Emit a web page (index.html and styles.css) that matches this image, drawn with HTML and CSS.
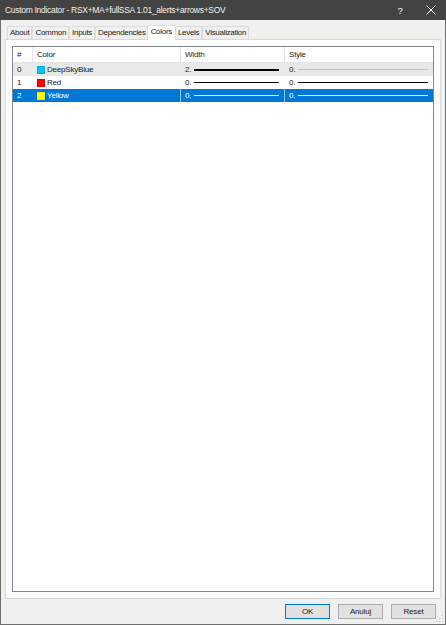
FILE: index.html
```html
<!DOCTYPE html>
<html>
<head>
<meta charset="utf-8">
<link rel="stylesheet" href="styles.css">
</head>
<body>
<div class="window">
  <div class="titlebar">
    <span class="title">Custom Indicator - RSX+MA+fullSSA 1.01_alerts+arrows+SOV</span>
    <span class="help">?</span>
    <span class="close"><svg width="10" height="10" viewBox="0 0 10 10"><path d="M0.5 0.5L9.5 9.5M9.5 0.5L0.5 9.5" stroke="#fff" stroke-width="1"/></svg></span>
  </div>
  <div class="body">
    <div class="tabs">
      <div class="tab">About</div>
      <div class="tab">Common</div>
      <div class="tab">Inputs</div>
      <div class="tab">Dependencies</div>
      <div class="tab active">Colors</div>
      <div class="tab">Levels</div>
      <div class="tab">Visualization</div>
    </div>
    <div class="panel">
      <div class="list">
        <div class="row head">
          <div class="c c0">#</div>
          <div class="c c1">Color</div>
          <div class="c c2">Width</div>
          <div class="c c3">Style</div>
        </div>
        <div class="row r-gray">
          <div class="c c0">0</div>
          <div class="c c1"><span class="sw" style="background:#00bfff"></span>DeepSkyBlue</div>
          <div class="c c2">2.<span class="ln thick"></span></div>
          <div class="c c3">0.<span class="ln light"></span></div>
        </div>
        <div class="row">
          <div class="c c0">1</div>
          <div class="c c1"><span class="sw" style="background:#ff0000"></span>Red</div>
          <div class="c c2">0.<span class="ln"></span></div>
          <div class="c c3">0.<span class="ln"></span></div>
        </div>
        <div class="row sel">
          <div class="c c0">2</div>
          <div class="c c1"><span class="sw" style="background:#ffff00"></span>Yellow</div>
          <div class="c c2">0.<span class="ln"></span></div>
          <div class="c c3">0.<span class="ln"></span></div>
        </div>
      </div>
    </div>
    <div class="buttons">
      <div class="btn default">OK</div>
      <div class="btn">Anuluj</div>
      <div class="btn">Reset</div>
    </div>
  </div>
  <svg class="grip" width="8" height="8" viewBox="0 0 8 8">
    <rect x="6" y="0" width="1" height="1" fill="#b5b5b5"/>
    <rect x="3" y="3" width="1" height="1" fill="#b5b5b5"/>
    <rect x="6" y="3" width="1" height="1" fill="#b5b5b5"/>
    <rect x="0" y="6" width="1" height="1" fill="#b5b5b5"/>
    <rect x="3" y="6" width="1" height="1" fill="#b5b5b5"/>
    <rect x="6" y="6" width="1" height="1" fill="#b5b5b5"/>
  </svg>
</div>
</body>
</html>
```
FILE: styles.css
```css
html, body { margin: 0; padding: 0; }
body { font-family: "Liberation Sans", Arial, sans-serif; font-size: 8px; letter-spacing: -0.2px; color: #1a1a1a; }
.window {
  width: 446px; height: 625px; box-sizing: border-box;
  border: 1px solid #6e6e6e; border-top: none; position: relative;
  background: #f0f0f0; display: flex; flex-direction: column;
}
.titlebar {
  height: 20px; background: #434343; color: #fff;
  display: flex; align-items: center; margin: 0 -1px;
}
.title { flex: 1; padding-left: 5px; font-size: 8.5px; letter-spacing: -0.3px; color: #f0f0f0; }
.help { width: 20px; text-align: center; font-size: 9.5px; margin-right: 2px; }
.close { width: 34px; display: flex; justify-content: center; }
.close svg { display: block; margin-left: 4px; }
.body { flex: 1; display: flex; flex-direction: column; padding: 4px 4px 0 4px; }
.tabs { display: flex; padding-left: 2px; height: 15px; align-items: flex-end; position: relative; z-index: 1; }
.tab {
  height: 13px; box-sizing: border-box; padding: 0 2px; line-height: 12px; letter-spacing: -0.3px;
  border: 1px solid #dcdcdc; border-bottom: none; margin-right: 0; background: #f0f0f0;
}
.tab.active { height: 15px; background: #fff; margin: 0 -1px -1px -2px; padding: 0 3px; line-height: 12px; position: relative; }
.panel {
  flex: 1; border: 1px solid #d9d9d9; background: #fff;
  padding: 6px 6px 6px 6px; display: flex;
}
.list { flex: 1; border: 1px solid #828790; background: #fff; }
.row { display: flex; height: 13px; line-height: 13px; }
.row.head { height: 15px; line-height: 14px; border-bottom: 1px solid #e5e5e5; }
.c { box-sizing: border-box; padding-left: 4px; display: flex; align-items: center; white-space: nowrap; border-right: 1px solid #e5e5e5; }
.row:not(.head) .c { border-right-color: transparent; }
.c0 { width: 20px; }
.c1 { width: 148px; }
.c2 { width: 104px; }
.c3 { flex: 1; border-right: none; }
.r-gray { background: #e8e8e8; }
.sel { background: #0078d7; color: #fff; }
.sel .c1, .sel .c2 { border-right: 1px solid #99c9ef !important; }
.sw { width: 8px; height: 8px; margin-right: 2px; box-sizing: border-box; border: 1px solid rgba(0,0,0,0.08); }
.ln { flex: 1; height: 1px; background: #000; margin: 0 5px 0 3px; }
.ln.thick { height: 2px; }
.ln.light { background: #c4c4c4; }
.sel .ln { background: #fff; }
.buttons { height: 25px; display: flex; justify-content: flex-end; align-items: center; gap: 8px; padding-right: 5px; }
.btn {
  width: 45px; height: 15px; box-sizing: border-box; border: 1px solid #adadad;
  background: #e1e1e1; text-align: center; line-height: 13px;
}
.btn.default { border-color: #0078d7; }
.grip { position: absolute; right: 1px; bottom: 1px; }
```
